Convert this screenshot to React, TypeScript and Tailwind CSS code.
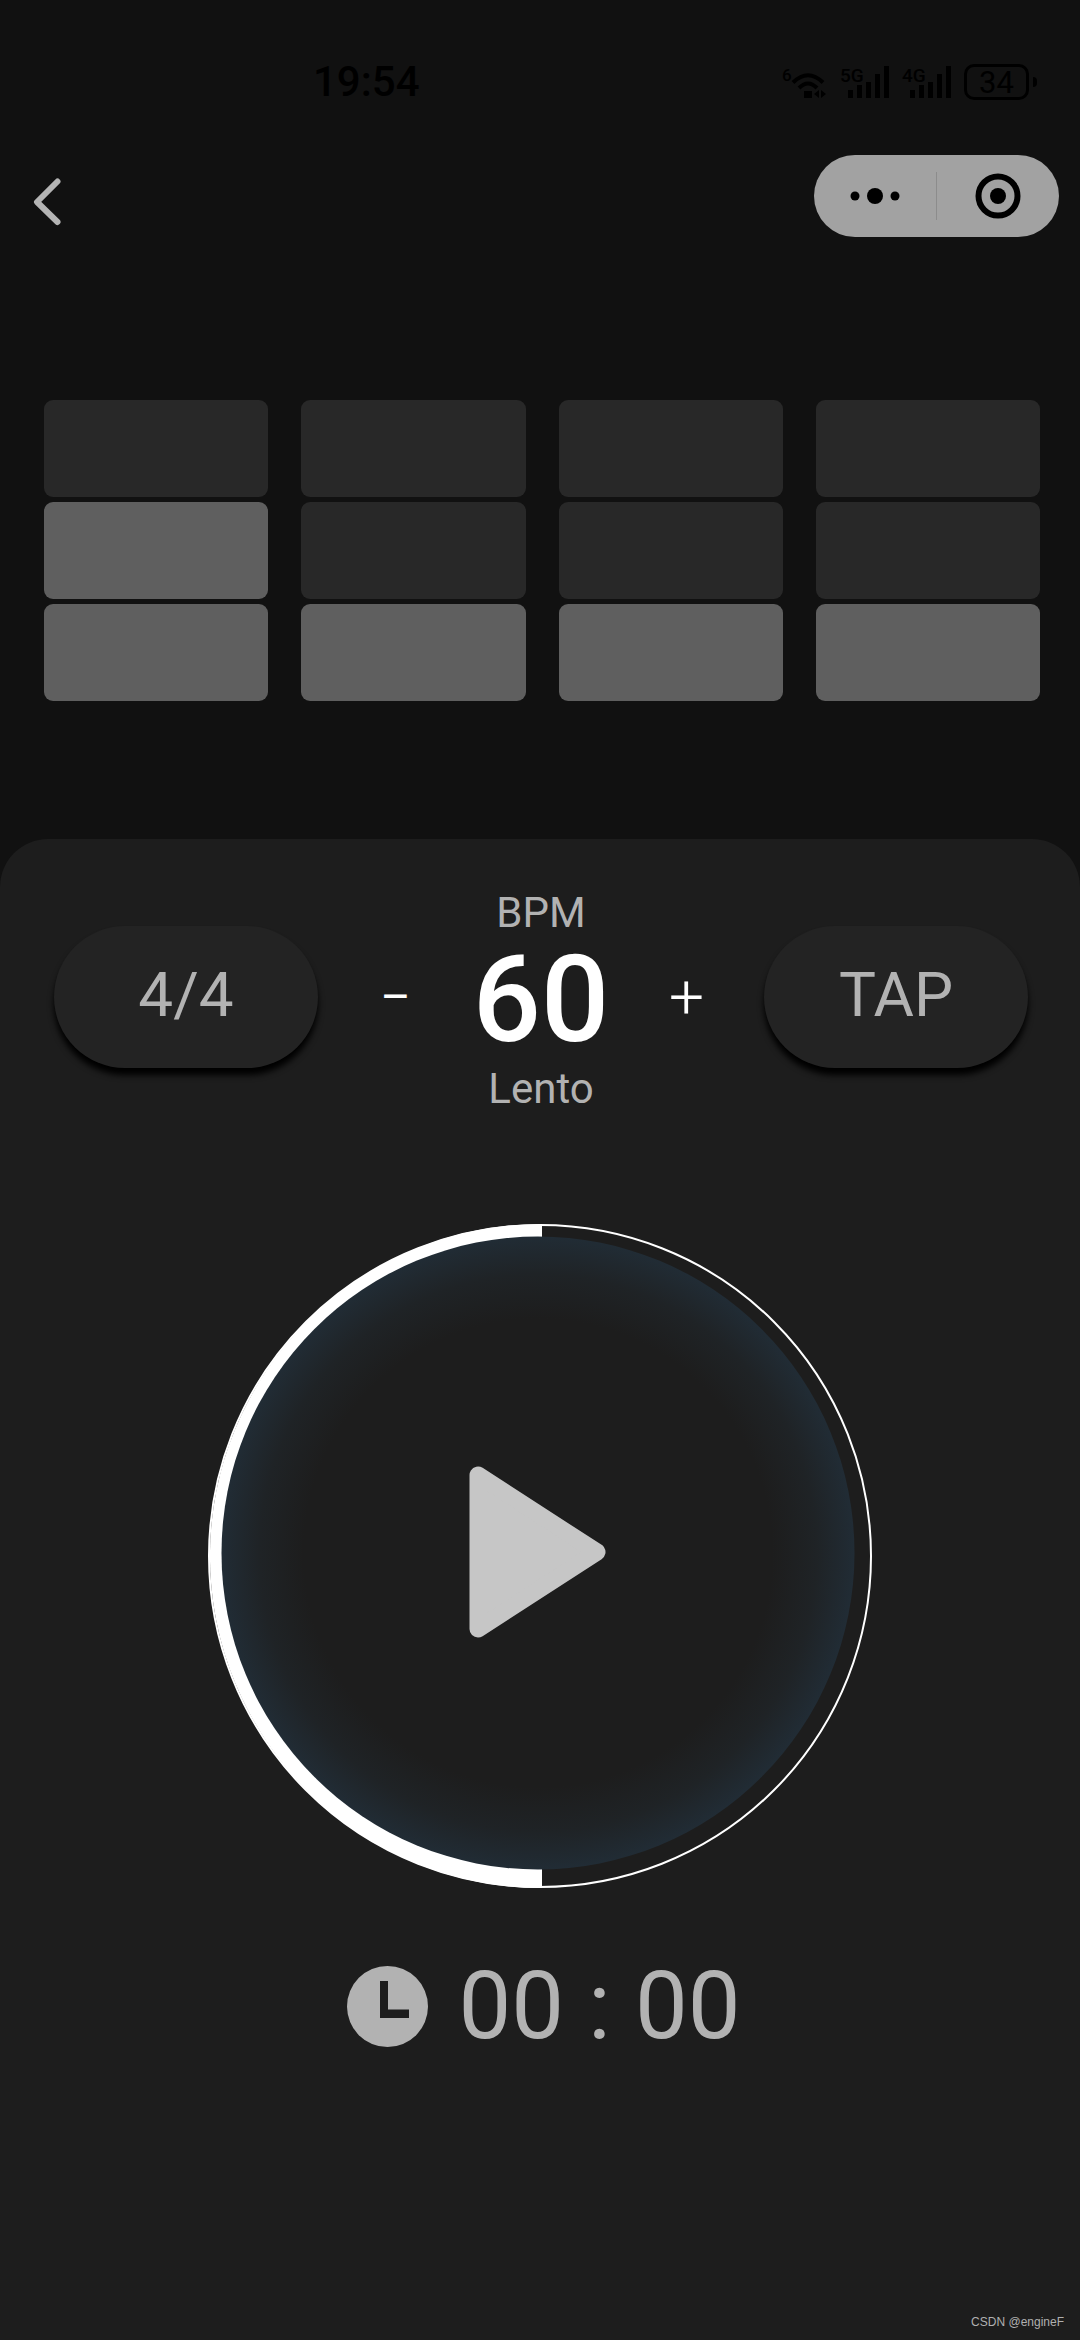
import { useState } from 'react'

const BEATS = [2, 1, 1, 1]
const ROWS = [3, 2, 1]

const WifiIcon = () => (
  <svg width="48" height="36" viewBox="0 0 48 36" fill="none" stroke="#000" strokeWidth="4" aria-hidden="true">
    <text x="0" y="17" fontSize="17" fontWeight="500" fill="#000" stroke="none">
      6
    </text>
    <path d="M11 18.500 Q26 4 41 18.500" />
    <path d="M17 24 Q26 15 35 24" />
    <path d="M22 27h8v7h-8z" fill="#000" stroke="none" />
    <path d="M37 26v8l-5-4zM39 26l5 4-5 4z" fill="#000" stroke="none" />
  </svg>
)

const SignalIcon = ({ label }: { label: string }) => (
  <svg width="52" height="36" viewBox="0 0 52 36" fill="#000" aria-hidden="true">
    <text x="0" y="18" fontSize="19" fontWeight="500">
      {label}
    </text>
    <rect x="8" y="26" width="5" height="8" />
    <rect x="17" y="21" width="5" height="13" />
    <rect x="26" y="18" width="5" height="16" />
    <rect x="35" y="10" width="5" height="24" />
    <rect x="44" y="2" width="5" height="32" />
  </svg>
)

const StatusBar = () => (
  <div className="flex items-center justify-between pt-[60px] pr-[43px] pl-[313px] text-black">
    <span className="text-[42px] leading-[44px] font-medium">19:54</span>
    <div className="flex items-center gap-[10px]">
      <WifiIcon />
      <SignalIcon label="5G" />
      <SignalIcon label="4G" />
      <div className="flex items-center gap-1">
        <span className="flex h-9 w-[65px] items-center justify-center rounded-[10px] border-[3px] border-black text-[31px] leading-none">
          34
        </span>
        <span className="h-[10px] w-1 rounded-r bg-black" />
      </div>
    </div>
  </div>
)

const Header = () => (
  <header className="flex items-center justify-between pt-[51px] pr-[21px] pl-[33px]">
    <button type="button" aria-label="Back" className="pt-3">
      <svg width="30" height="48" viewBox="0 0 30 48" fill="none" stroke="#b4b4b4" strokeWidth="6" strokeLinecap="round" strokeLinejoin="round">
        <path d="M24.500 3.500 4 24l20.500 20" />
      </svg>
    </button>
    <div className="flex h-[82px] w-[245px] items-center rounded-full bg-[#a2a2a2]">
      <button type="button" aria-label="More" className="flex flex-1 justify-center">
        <svg width="50" height="16" viewBox="0 0 50 16">
          <circle cx="5" cy="8" r="4.500" />
          <circle cx="25" cy="8" r="8" />
          <circle cx="45" cy="8" r="4.500" />
        </svg>
      </button>
      <span className="h-12 w-px bg-[#8c8c8c]" />
      <button type="button" aria-label="Close" className="flex flex-1 justify-center">
        <svg width="46" height="46" viewBox="0 0 46 46">
          <circle cx="23" cy="23" r="19.500" fill="none" stroke="#000" strokeWidth="6" />
          <circle cx="23" cy="23" r="8" />
        </svg>
      </button>
    </div>
  </header>
)

const BeatGrid = () => (
  <div className="grid grid-cols-4 gap-[33px] pt-[163px] pr-10 pl-11">
    {BEATS.map((level, beat) => (
      <div key={beat} className="flex flex-col gap-[5px]">
        {ROWS.map((row) => (
          <div
            key={row}
            className={`h-[97px] rounded-[9px] ${row <= level ? 'bg-[#5f5f5f]' : 'bg-[#282828]'}`}
          />
        ))}
      </div>
    ))}
  </div>
)

const pill =
  'h-[142px] w-[264px] rounded-full bg-[#232323] pb-1 text-[62px] leading-none text-[#b2b2b2] shadow-[0_7px_6px_#000]'
const step = 'h-20 w-20 leading-none text-white'

export default function App() {
  const [bpm, setBpm] = useState(60)

  return (
    <main className="flex min-h-screen flex-col bg-[#111111] font-['Roboto','Noto_Sans',sans-serif]">
      <StatusBar />
      <Header />
      <BeatGrid />

      <section className="mt-[138px] flex flex-1 flex-col items-center rounded-t-[48px] bg-[#1d1d1d]">
        <div className="flex w-full items-center justify-between pt-[37px] pr-[52px] pl-[54px]">
          <button type="button" className={pill}>
            4/4
          </button>
          <button
            type="button"
            aria-label="Slower"
            className={`${step} text-[46px]`}
            onClick={() => setBpm(bpm - 1)}
          >
            –
          </button>
          <div className="flex w-[136px] flex-col items-center pt-[10px] text-[42px] text-[#b2b2b2]">
            <span className="leading-[54px]">BPM</span>
            <span className="text-[120px] leading-[120px] font-medium text-white">{bpm}</span>
            <span className="leading-[58px]">Lento</span>
          </div>
          <button
            type="button"
            aria-label="Faster"
            className={`${step} text-[62px] font-light`}
            onClick={() => setBpm(bpm + 1)}
          >
            +
          </button>
          <button type="button" className={pill}>
            TAP
          </button>
        </div>

        <button type="button" aria-label="Play" className="mt-[106px]">
          <svg width="664" height="664" viewBox="0 0 664 664">
            <defs>
              <radialGradient id="glow">
                <stop offset="0.74" stopColor="#1d1d1d" />
                <stop offset="0.88" stopColor="#1f2326" />
                <stop offset="1" stopColor="#212c35" />
              </radialGradient>
            </defs>
            <circle cx="332" cy="332" r="331" fill="none" stroke="#fff" strokeWidth="2" />
            <path d="M334 0A332 332 0 1 0 334 664z" fill="#fff" />
            <path d="M334 13A317 317 0 0 1 334 646z" fill="#1d1d1d" />
            <circle cx="330" cy="329" r="316.500" fill="url(#glow)" />
            <path
              d="M270 251v154L389 328z"
              fill="#c6c6c6"
              stroke="#c6c6c6"
              strokeWidth="17"
              strokeLinejoin="round"
            />
          </svg>
        </button>

        <div className="mt-[62px] flex items-center pb-[240px] pl-2 text-[#b2b2b2]">
          <svg width="81" height="81" viewBox="0 0 81 81" aria-hidden="true">
            <circle cx="40.500" cy="40.500" r="40.500" fill="#b2b2b2" />
            <path d="M33 15h8v28.500h21V52H33z" fill="#1d1d1d" />
          </svg>
          <div className="flex gap-6 pl-[30px] text-[94px] leading-[112px]">
            <span>00</span>
            <span>:</span>
            <span>00</span>
          </div>
        </div>

        <p className="mt-auto self-end pr-4 pb-2 font-['Liberation_Sans',sans-serif] text-xs leading-5 text-[#b0b0b0]">
          CSDN @engineF
        </p>
      </section>
    </main>
  )
}
